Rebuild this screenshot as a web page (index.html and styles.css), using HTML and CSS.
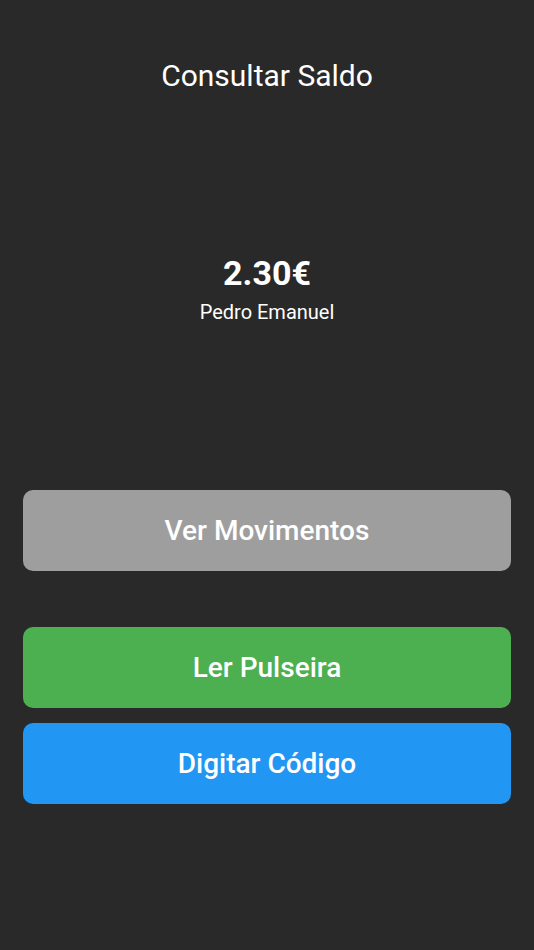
FILE: index.html
```html
<!DOCTYPE html>
<html lang="pt">
<head>
<meta charset="UTF-8">
<meta name="viewport" content="width=device-width, initial-scale=1.0">
<title>Consultar Saldo</title>
<link rel="stylesheet" href="styles.css">
</head>
<body>
<div class="screen">
  <h1 class="title">Consultar Saldo</h1>

  <div class="balance">
    <div class="amount">2.30€</div>
    <div class="owner">Pedro Emanuel</div>
  </div>

  <div class="actions">
    <button class="btn btn-grey">Ver Movimentos</button>
    <div class="read-group">
      <button class="btn btn-green">Ler Pulseira</button>
      <button class="btn btn-blue">Digitar Código</button>
    </div>
  </div>
</div>
</body>
</html>
```

FILE: styles.css
```css
* {
  box-sizing: border-box;
}
body {
  margin: 0;
  background-color: #292929;
  font-family: Roboto, "Noto Sans", sans-serif;
  color: #ffffff;
}
.screen {
  height: 950px;
  padding: 0 23px;
  display: flex;
  flex-direction: column;
}
.title {
  margin: 0;
  padding-top: 58px;
  font-size: 30px;
  font-weight: 400;
  line-height: 36px;
  text-align: center;
}
.balance {
  margin-top: 159px;
  display: flex;
  flex-direction: column;
  align-items: center;
}
.amount {
  font-size: 34px;
  font-weight: 700;
  line-height: 40px;
}
.owner {
  margin-top: 7px;
  font-size: 20px;
  line-height: 24px;
}
.actions {
  margin-top: 166px;
  display: flex;
  flex-direction: column;
  gap: 56px;
}
.read-group {
  display: flex;
  flex-direction: column;
  gap: 15px;
}
.btn {
  height: 81px;
  width: 100%;
  border: none;
  border-radius: 10px;
  color: #ffffff;
  font-family: Roboto, "Noto Sans", sans-serif;
  font-size: 28px;
  font-weight: 500;
}
.btn-grey {
  background-color: #9e9e9e;
}
.btn-green {
  background-color: #4caf50;
}
.btn-blue {
  background-color: #2196f3;
}
```
